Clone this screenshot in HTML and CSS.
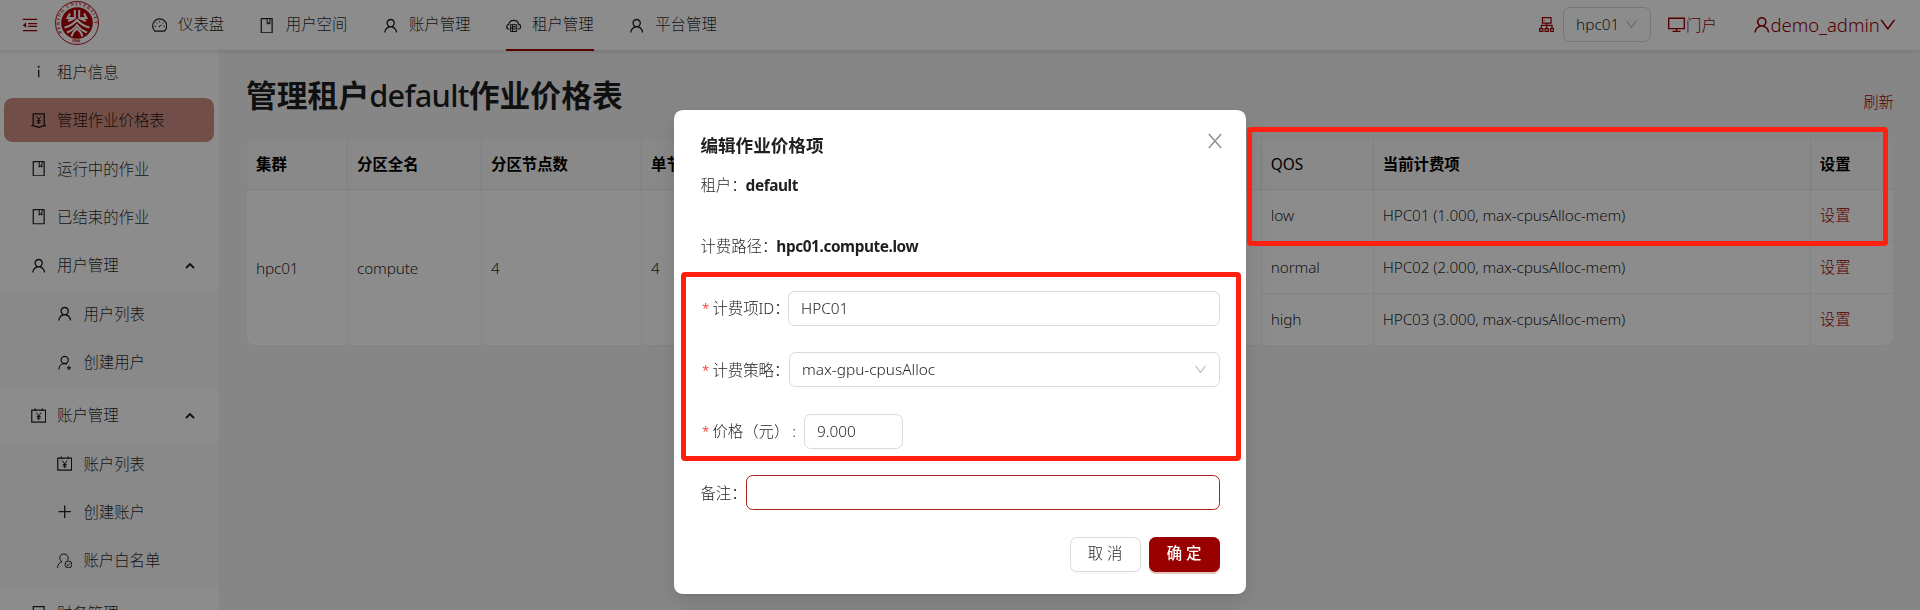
FILE: index.html
```html
<!DOCTYPE html>
<html lang="zh-CN">
<head>
<meta charset="utf-8">
<title>管理作业价格表</title>
<link rel="stylesheet" href="styles.css">
</head>
<body>
<svg class="sprite" aria-hidden="true">
  <symbol id="user" viewBox="64 64 896 896"><path d="M858.5 763.6a374 374 0 00-80.6-119.5 375.63 375.63 0 00-119.5-80.6c-.4-.2-.8-.3-1.2-.5C719.5 518 760 444.7 760 362c0-137-111-248-248-248S264 225 264 362c0 82.7 40.5 156 102.8 201.1-.4.2-.8.3-1.2.5-44.8 18.9-85 46-119.5 80.6a375.63 375.63 0 00-80.6 119.5A371.7 371.7 0 00136 901.8a8 8 0 008 8.2h60c4.4 0 7.9-3.5 8-7.8 2-77.2 33-149.5 87.8-204.3 56.7-56.7 132-87.9 212.2-87.9s155.5 31.2 212.2 87.9C779 752.7 810 825 812 902.2c.1 4.4 3.6 7.8 8 7.8h60a8 8 0 008-8.2c-1-47.8-10.9-94.3-29.5-138.2zM512 534c-45.9 0-89.1-17.9-121.6-50.4S340 407.9 340 362c0-45.9 17.9-89.1 50.4-121.6S466.1 190 512 190s89.1 17.9 121.6 50.4S684 316.1 684 362c0 45.9-17.9 89.1-50.4 121.6S557.9 534 512 534z"/></symbol>
  <symbol id="down" viewBox="64 64 896 896"><path d="M884 256h-75c-5.1 0-9.9 2.5-12.9 6.6L512 654.2 227.9 262.6c-3-4.1-7.8-6.6-12.9-6.6h-75c-6.5 0-10.3 7.4-6.5 12.7l352.6 486.1c12.8 17.6 39 17.6 51.7 0l352.6-486.1c3.9-5.3.1-12.7-6.4-12.7z"/></symbol>
  <symbol id="book" viewBox="64 64 896 896"><path d="M832 64H192c-17.7 0-32 14.3-32 32v832c0 17.7 14.3 32 32 32h640c17.7 0 32-14.3 32-32V96c0-17.7-14.3-32-32-32zM668 345.9L621.5 312 572 347.4V124h96v221.9zM792 888H232V136h280v296.9c0 3.3 1 6.6 3 9.3a15.9 15.9 0 0022.3 3.7l83.8-59.9 81.4 59.4c2.7 2 6 3.1 9.4 3.1 8.8 0 16-7.2 16-16V136h64v752z"/></symbol>
  <symbol id="info" viewBox="64 64 896 896"><path d="M448 224a64 64 0 10128 0 64 64 0 10-128 0zM474 392h76v448h-76z"/></symbol>
  <symbol id="fold" viewBox="64 64 896 896"><path d="M112 158h800v72H112zM408 406h504v68H408zM408 560h504v68H408zM112 794h800v72H112zM115 519l160 126c9 6 20 0 20-9V388c0-9-11-15-20-9L115 505c-5 4-5 11 0 14z"/></symbol>
  <symbol id="dash" viewBox="64 64 896 896"><path class="ln" d="M242 834A410 410 0 1 1 782 834z"/><path class="ln" stroke-width="52" d="M512 240v80M300 332l54 54M724 332l-54 54M212 544h80M732 544h80M496 560l104-104"/><circle cx="500" cy="556" r="42"/></symbol>
  <symbol id="cloud" viewBox="64 64 896 896"><path class="ln" d="M252 710C60 700 64 474 222 438 290 130 734 130 802 438 960 474 964 700 772 710"/><path class="ln" stroke-width="60" d="M332 454h360v396H332zM332 652h360M440 454v396"/><path d="M490 535h130v48H490zM490 730h130v48H490z"/></symbol>
  <symbol id="cert" viewBox="64 64 896 896"><path class="ln" d="M192 800V110h640v690M84 800h108l320 100 320-100h108"/><path class="ln" stroke-width="58" d="M390 264l122 190 122-190M512 454v250M400 500h224M400 600h224"/></symbol>
  <symbol id="account" viewBox="64 64 896 896"><path class="ln" d="M108 192h808v692H108zM312 100v140M712 100v140"/><path class="ln" stroke-width="62" d="M374 330l138 204 138-204M512 534v240M398 560h228M398 656h228"/></symbol>
  <symbol id="adduser" viewBox="64 64 896 896"><path class="ln" d="M168 910c8-200 148-338 336-338 56 0 106 12 150 34M760 690v240M640 810h240"/><circle class="ln" cx="512" cy="350" r="208"/></symbol>
  <symbol id="check" viewBox="64 64 896 896"><path class="ln" stroke-width="58" d="M92 930c8-180 114-310 260-358-190-116-170-440 96-454 236-4 330 230 220 380"/><circle class="ln" stroke-width="58" cx="732" cy="732" r="200"/><path class="ln" stroke-width="58" d="M632 736l72 66 124-142"/></symbol>
  <symbol id="plus" viewBox="64 64 896 896"><path d="M474 152h76v720h-76zM152 474h720v76H152z"/></symbol>
  <symbol id="book2" viewBox="64 64 896 896"><path class="ln" d="M196 100h632v824H196zM360 310l152 190 152-190"/></symbol>
  <symbol id="cluster" viewBox="64 64 896 896"><path class="ln" d="M262 104h500v310H262zM512 414v290M200 704V558h624v146M104 744h184v160H104zM420 744h184v160H420zM736 744h184v160H736z"/><circle cx="360" cy="260" r="40"/></symbol>
  <symbol id="desktop" viewBox="64 64 896 896"><path class="ln" d="M100 180h824v552H100zM512 732v144M304 872h416"/></symbol>
  <symbol id="close" viewBox="64 64 896 896"><path class="ln" d="M204 168l616 688M820 168L204 856"/></symbol>
  <symbol id="up" viewBox="0 0 10 7"><path d="M1 6l4-4 4 4" fill="none" stroke="currentColor" stroke-width="1.9"/></symbol>
</svg>

<header class="header">
  <svg class="icon fold"><use href="#fold"/></svg>
  <svg class="logo" viewBox="0 0 44 44">
    <defs>
      <path id="ring" d="M7.2 31.5A17.6 17.6 0 1 1 36.8 31.5"/>
      <path id="base" d="M10 37.4A20 20 0 0 0 34 37.4"/>
    </defs>
    <circle cx="22" cy="22" r="21.5" fill="#fff" stroke="#b4141c"/>
    <circle cx="22" cy="22" r="15.8" fill="#b00006"/>
    <g fill="none" stroke="#fff" stroke-width="2">
      <path d="M19.8 9v8.2L13 20M24.2 9v8.2L31 20M15 12.5l-2.5 4.5h6M29 12.5l2.5 4.5h-6"/>
      <path d="M9.5 26.5C14 25.5 18 23.5 22 19c4 4.500 8 6.500 12.500 7.500M12 31.500c4-1.500 7.500-4 10-7.500 2.500 3.500 6 6 10 7.500M16.500 35.500c1-4 3-6 5.500-8 2.500 2 4.500 4 5.500 8"/>
    </g>
    <text class="ringtext"><textPath href="#ring" textLength="66">PEKING UNIVERSITY</textPath></text>
    <text class="ringtext"><textPath href="#base" startOffset="7">1898</textPath></text>
  </svg>
  <nav class="nav">
    <a class="navitem"><svg class="icon"><use href="#dash"/></svg>仪表盘</a>
    <a class="navitem"><svg class="icon"><use href="#book"/></svg>用户空间</a>
    <a class="navitem"><svg class="icon"><use href="#user"/></svg>账户管理</a>
    <a class="navitem current"><svg class="icon"><use href="#cloud"/></svg>租户管理</a>
    <a class="navitem"><svg class="icon"><use href="#user"/></svg>平台管理</a>
  </nav>
  <div class="tools">
    <svg class="icon"><use href="#cluster"/></svg>
    <div class="cluster">hpc01<svg class="icon caret"><use href="#down"/></svg></div>
    <a class="portal"><svg class="icon"><use href="#desktop"/></svg>门户</a>
    <a class="account"><svg class="icon"><use href="#user"/></svg><span class="name">demo_admin</span><svg class="icon"><use href="#down"/></svg></a>
  </div>
</header>

<div class="body">
  <aside class="side">
    <a class="item"><svg class="icon"><use href="#info"/></svg>租户信息</a>
    <a class="item selected"><svg class="icon"><use href="#cert"/></svg>管理作业价格表</a>
    <a class="item"><svg class="icon"><use href="#book"/></svg>运行中的作业</a>
    <a class="item"><svg class="icon"><use href="#book"/></svg>已结束的作业</a>
    <a class="item"><svg class="icon"><use href="#user"/></svg>用户管理<svg class="up"><use href="#up"/></svg></a>
    <div class="submenu">
      <a class="item"><svg class="icon"><use href="#user"/></svg>用户列表</a>
      <a class="item"><svg class="icon"><use href="#adduser"/></svg>创建用户</a>
    </div>
    <a class="item"><svg class="icon"><use href="#account"/></svg>账户管理<svg class="up"><use href="#up"/></svg></a>
    <div class="submenu">
      <a class="item"><svg class="icon"><use href="#account"/></svg>账户列表</a>
      <a class="item"><svg class="icon"><use href="#plus"/></svg>创建账户</a>
      <a class="item"><svg class="icon"><use href="#check"/></svg>账户白名单</a>
    </div>
    <a class="item"><svg class="icon"><use href="#book2"/></svg>财务管理</a>
  </aside>
  <main class="main">
    <div class="heading">
      <h1>管理租户<span class="tenant">default</span>作业价格表</h1>
      <a class="link">刷新</a>
    </div>
    <table class="prices">
      <colgroup><col class="c1"><col class="c2"><col class="c3"><col class="c4"><col class="c4"><col class="c4"><col class="c5"><col class="c6"><col></colgroup>
      <thead>
        <tr><th>集群</th><th>分区全名</th><th>分区节点数</th><th>单节点CPU核数</th><th>单节点GPU数</th><th>单节点内存数(MB)</th><th class="latin">QOS</th><th>当前计费项</th><th>设置</th></tr>
      </thead>
      <tbody>
        <tr><td rowspan="3">hpc01</td><td rowspan="3">compute</td><td rowspan="3">4</td><td rowspan="3">4</td><td rowspan="3">0</td><td rowspan="3">8192</td><td>low</td><td>HPC01 (1.000, max-cpusAlloc-mem)</td><td><a class="link">设置</a></td></tr>
        <tr><td>normal</td><td>HPC02 (2.000, max-cpusAlloc-mem)</td><td><a class="link">设置</a></td></tr>
        <tr><td>high</td><td>HPC03 (3.000, max-cpusAlloc-mem)</td><td><a class="link">设置</a></td></tr>
      </tbody>
    </table>
  </main>
</div>

<div class="mask">
  <section class="modal">
    <svg class="icon close"><use href="#close"/></svg>
    <h2>编辑作业价格项</h2>
    <div class="row first"><span class="label">租户：</span><strong>default</strong></div>
    <div class="row"><span class="label">计费路径：</span><strong>hpc01.compute.low</strong></div>
    <div class="row"><span class="label req w-id">计费项ID：</span><div class="input">HPC01</div></div>
    <div class="row"><span class="label req w-st">计费策略：</span><div class="input">max-gpu-cpusAlloc<svg class="icon caret"><use href="#down"/></svg></div></div>
    <div class="row"><span class="label req w-pr">价格（元）<i class="colon">:</i></span><div class="input num">9.000</div></div>
    <div class="row"><span class="label w-nt">备注：</span><div class="input focus"></div></div>
    <div class="footer"><button class="btn">取 消</button><button class="btn primary">确 定</button></div>
  </section>
</div>
<div class="mark mark-table"></div>
<div class="mark mark-form"></div>
</body>
</html>
```

FILE: styles.css
```css
* { box-sizing: border-box; }
body {
  margin: 0;
  height: 610px;
  overflow: hidden;
  background: #f5f5f5;
  color: rgba(0, 0, 0, .88);
  font: 15.4px/24.2px "Noto Sans", "Noto Sans CJK SC", sans-serif;
  font-weight: 300;
}
.sprite { display: none; }
.icon { width: 15.4px; height: 15.4px; fill: currentColor; flex: none; }
.ln { fill: none; stroke: currentColor; stroke-width: 72px; }
.ln[stroke-width] { stroke-width: 58px; }
.link { color: #900; }

/* top bar */
.header {
  position: relative;
  display: flex;
  align-items: center;
  height: 50px;
  padding: 0 23px 0 21.500px;
  background: #fff;
  box-shadow: 0 1px 5px rgba(0, 0, 0, .15);
  z-index: 1;
}
.fold { color: #900; width: 16px; height: 16px; }
.logo { width: 44px; height: 44px; margin: -4px 0 0 17px; }
.ringtext { font: bold 4.6px "Liberation Serif", serif; fill: #b4141c; }
.nav { display: flex; margin-left: 35.500px; height: 51px; align-self: flex-start; }
.navitem {
  display: flex;
  align-items: center;
  gap: 11px;
  margin: 0 17.6px;
  padding-top: 2px;
  border-bottom: 2px solid transparent;
}
.navitem.current { border-color: #900; }
.tools { display: flex; align-items: center; margin-left: auto; color: #900; height: 50px; }
.tools > .icon { margin-right: 9px; }
.cluster {
  display: flex;
  align-items: center;
  justify-content: space-between;
  width: 88px;
  height: 35px;
  margin: -1px 17px 0 0;
  padding: 2px 12px 0;
  border: 1px solid #d9d9d9;
  border-radius: 6.600px;
  color: rgba(0, 0, 0, .88);
}
.caret { width: 13px; height: 13px; margin-top: -2px; color: rgba(0, 0, 0, .25); }
.portal { display: flex; align-items: center; gap: 1px; padding-top: 2px; }
.portal .icon { width: 17px; height: 17px; margin-top: -2px; }
.account { display: flex; align-items: center; margin-left: 36px; font-size: 18.500px; }
.account .icon { width: 17.600px; height: 17.600px; }
.name { width: 109px; white-space: nowrap; }

/* side menu */
.body { display: flex; height: 560px; }
.side { width: 219.500px; flex: none; background: #fff; border-right: 1px solid #f0f0f0; overflow: hidden; }
.item {
  display: flex;
  align-items: center;
  gap: 11px;
  width: 210px;
  height: 44px;
  margin: 0 4px 4.400px;
  padding: 2px 19px 0 26.600px;
  border-radius: 8.800px;
}
.item svg { margin-top: -2px; }
.selected { background: #cf8e83; }
.up { width: 10px; height: 7px; margin-left: auto; }
.submenu { padding-bottom: .1px; background: #fafafa; margin-bottom: 4.400px; }
.submenu .item { padding-left: 53px; }

/* content */
.main { flex: 1; padding: 24px 26px 0 26.500px; }
.heading { display: flex; justify-content: space-between; height: 63.500px; }
h1 { margin: 0; font-size: 30.800px; line-height: 42px; font-weight: 700; }
.tenant { font-weight: 500; letter-spacing: -.75px; }
.heading .link { margin-top: 17px; }
.prices {
  width: 1648px;
  table-layout: fixed;
  border-collapse: separate;
  border-spacing: 0;
  background: #fff;
  border: 1px solid #f0f0f0;
  border-radius: 8.800px;
}
.prices th, .prices td {
  height: 51.700px;
  padding: 2px 9px 0;
  text-align: left;
  white-space: nowrap;
  letter-spacing: -.17px;
  border-right: 1px solid #f0f0f0;
  border-bottom: 1px solid #f0f0f0;
}
.prices th { background: #fafafa; font-weight: 600; letter-spacing: 0; color: #000; border-color: #e8e8e8; }
.prices th:first-child { border-top-left-radius: 8px; }
.prices th:last-child { border-top-right-radius: 8px; }
.prices .latin { font-weight: 400; }
.prices th:last-child, .prices td:last-child { border-right: 0; }
.prices tbody tr:last-child td, .prices td[rowspan] { border-bottom: 0; }
.prices td .link { letter-spacing: 0; }
.c1 { width: 101px; }
.c2 { width: 134px; }
.c3 { width: 160px; }
.c4 { width: 206.600px; }
.c5 { width: 112px; }
.c6 { width: 437px; }

/* dialog */
.mask {
  position: fixed;
  inset: 0;
  display: flex;
  justify-content: center;
  align-items: flex-start;
  padding-top: 110px;
  background: rgba(0, 0, 0, .45);
  z-index: 10;
}
.modal {
  position: relative;
  width: 572px;
  height: 484px;
  padding: 22px 26.400px;
  background: #fff;
  border-radius: 8.800px;
  box-shadow: 0 6px 18px rgba(0, 0, 0, .08), 0 3px 7px -4px rgba(0, 0, 0, .12), 0 9px 30px 9px rgba(0, 0, 0, .05);
}
.close { position: absolute; top: 22px; right: 22px; width: 18px; height: 18px; color: rgba(0, 0, 0, .45); }
h2 { margin: 0; font-size: 17.600px; line-height: 26.400px; font-weight: 600; color: rgba(0, 0, 0, .88); }
.row { display: flex; align-items: center; height: 35.200px; margin-bottom: 26.400px; }
.row.first { margin-top: 9px; }
strong { font-weight: 700; letter-spacing: -.43px; padding-top: 2px; margin-left: -1px; }
.label { flex: none; white-space: nowrap; padding-top: 2px; }
.req::before {
  content: "*";
  display: inline-block;
  width: 12px;
  height: 20px;
  vertical-align: top;
  color: #ff4d4f;
  font: 17px/27px "Liberation Mono", monospace;
}
.colon { font-style: normal; margin-left: 3px; }
.w-id { width: 87.600px; }
.w-st { width: 88.600px; }
.w-pr { width: 103.600px; }
.w-nt { width: 45.600px; }
.input {
  flex: 1;
  display: flex;
  align-items: center;
  justify-content: space-between;
  height: 35.200px;
  padding: 1px 12px 0;
  border: 1px solid #d9d9d9;
  border-radius: 6.600px;
}
.input.num { flex: none; width: 99px; }
.input.focus { border-color: #a8201c; }
.footer { display: flex; justify-content: flex-end; gap: 8px; }
.btn {
  width: 71px;
  height: 35.200px;
  padding: 0;
  border: 1px solid #d9d9d9;
  border-radius: 6.600px;
  background: #fff;
  color: inherit;
  font: inherit;
  box-shadow: 0 2px 0 rgba(0, 0, 0, .02);
}
.primary { background: #900; border-color: #900; color: #fff; font-weight: 500; box-shadow: 0 2px 0 #e0c4c0; }

/* highlight frames */
.mark { position: fixed; border: 5px solid #ff2010; border-radius: 4px; z-index: 20; }
.mark-table { left: 1247px; top: 127px; width: 641px; height: 119px; }
.mark-form { left: 681px; top: 272px; width: 560px; height: 189px; }
```
